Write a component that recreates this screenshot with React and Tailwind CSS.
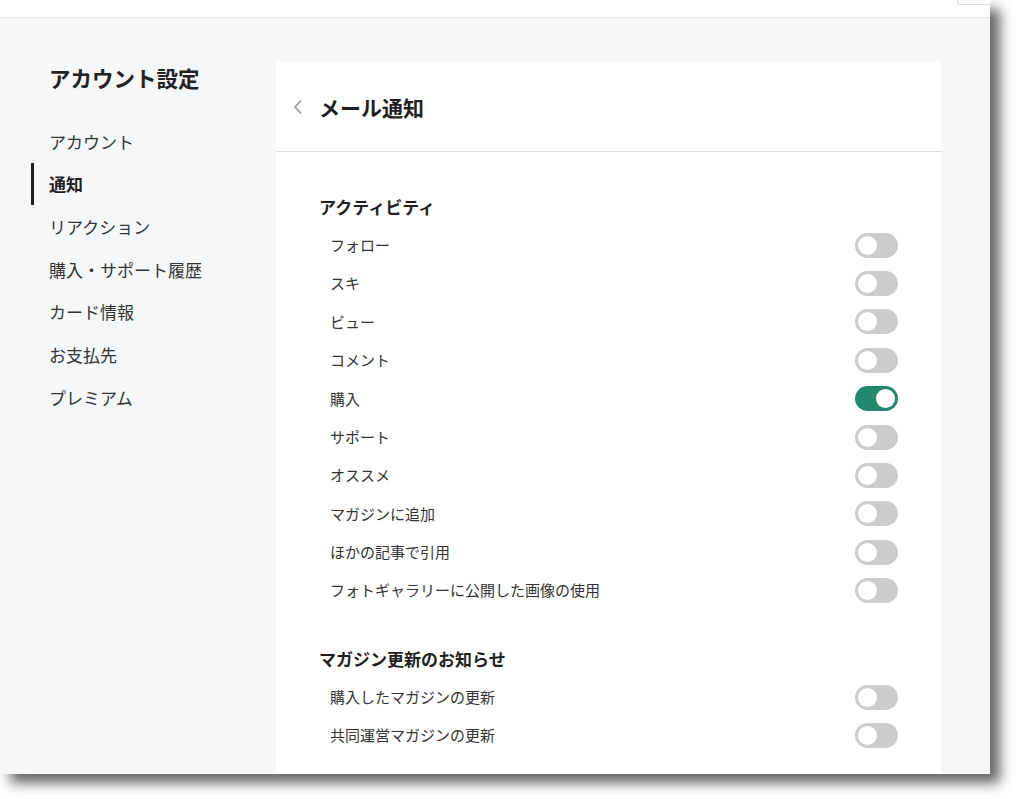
import React from "react";

const menu = [
  { label: "アカウント" },
  { label: "通知", active: true },
  { label: "リアクション" },
  { label: "購入・サポート履歴" },
  { label: "カード情報" },
  { label: "お支払先" },
  { label: "プレミアム" },
];

const sections = [
  {
    title: "アクティビティ",
    rows: [
      { label: "フォロー" },
      { label: "スキ" },
      { label: "ビュー" },
      { label: "コメント" },
      { label: "購入", on: true },
      { label: "サポート" },
      { label: "オススメ" },
      { label: "マガジンに追加" },
      { label: "ほかの記事で引用" },
      { label: "フォトギャラリーに公開した画像の使用" },
    ],
  },
  {
    title: "マガジン更新のお知らせ",
    rows: [{ label: "購入したマガジンの更新" }, { label: "共同運営マガジンの更新" }],
  },
];

function Toggle({ on }) {
  return (
    <div
      className={`flex items-center w-[43px] h-[25px] rounded-full px-[3px] ${
        on ? "bg-[#23896e] justify-end" : "bg-[#cbcccd] justify-start"
      }`}
    >
      <div className="w-[19px] h-[19px] rounded-full bg-white" />
    </div>
  );
}

export default function App() {
  return (
    <div
      className="w-[1016px] h-[799px] bg-white overflow-hidden"
      style={{ fontFamily: '"Noto Sans CJK JP", "Noto Sans", sans-serif' }}
    >
      <div className="w-[990px] h-[774px] flex flex-col bg-[#f5f7f8] overflow-hidden shadow-[10px_9px_12px_rgba(0,0,0,0.6)]">
        {/* top bar */}
        <div className="h-[18px] shrink-0 bg-white border-b border-[#e3e6e8] flex justify-end items-start">
          <div className="w-[33px] h-[5px] border-l border-b border-[#d9dcde] rounded-bl-[4px]" />
        </div>

        <div className="flex flex-1 min-h-0">
          {/* sidebar */}
          <div className="w-[276px] shrink-0 pl-[31px] pt-[46px]">
            <h1 className="ml-[18px] text-[21.5px] leading-[28px] font-bold text-[#222]">
              アカウント設定
            </h1>
            <ul className="mt-[28px]">
              {menu.map((item) => (
                <li
                  key={item.label}
                  className={`h-[42.7px] flex items-center pl-[15px] border-l-[3px] text-[17px] ${
                    item.active
                      ? "border-[#1f1f1f] font-bold text-[#1f1f1f]"
                      : "border-transparent text-[#333]"
                  }`}
                >
                  {item.label}
                </li>
              ))}
            </ul>
          </div>

          {/* card */}
          <div className="w-[665px] shrink-0 mt-[44px] bg-white rounded-t-[3px]">
            <div className="h-[90px] flex items-center pl-[17px] border-b border-[#dcdcdc]">
              <svg width="10" height="16" viewBox="0 0 10 16" className="mr-[16px]">
                <path d="M8 1.5 L2 8 L8 14.5" fill="none" stroke="#9a9a9a" strokeWidth="1.6" />
              </svg>
              <h2 className="text-[21px] font-bold text-[#1f1f1f] leading-[28px]">メール通知</h2>
            </div>

            <div className="px-[43px] pt-[36px]">
              {sections.map((sec, i) => (
                <div key={sec.title} className={i > 0 ? "mt-[30px]" : ""}>
                  <h3 className="h-[38px] flex items-center text-[17px] font-bold text-[#1f1f1f]">
                    {sec.title}
                  </h3>
                  {sec.rows.map((row) => (
                    <div
                      key={row.label}
                      className="h-[38.4px] flex items-center justify-between pl-[11px]"
                    >
                      <span className="text-[15px] text-[#333]">{row.label}</span>
                      <Toggle on={row.on} />
                    </div>
                  ))}
                </div>
              ))}
            </div>
          </div>
        </div>
      </div>
    </div>
  );
}
